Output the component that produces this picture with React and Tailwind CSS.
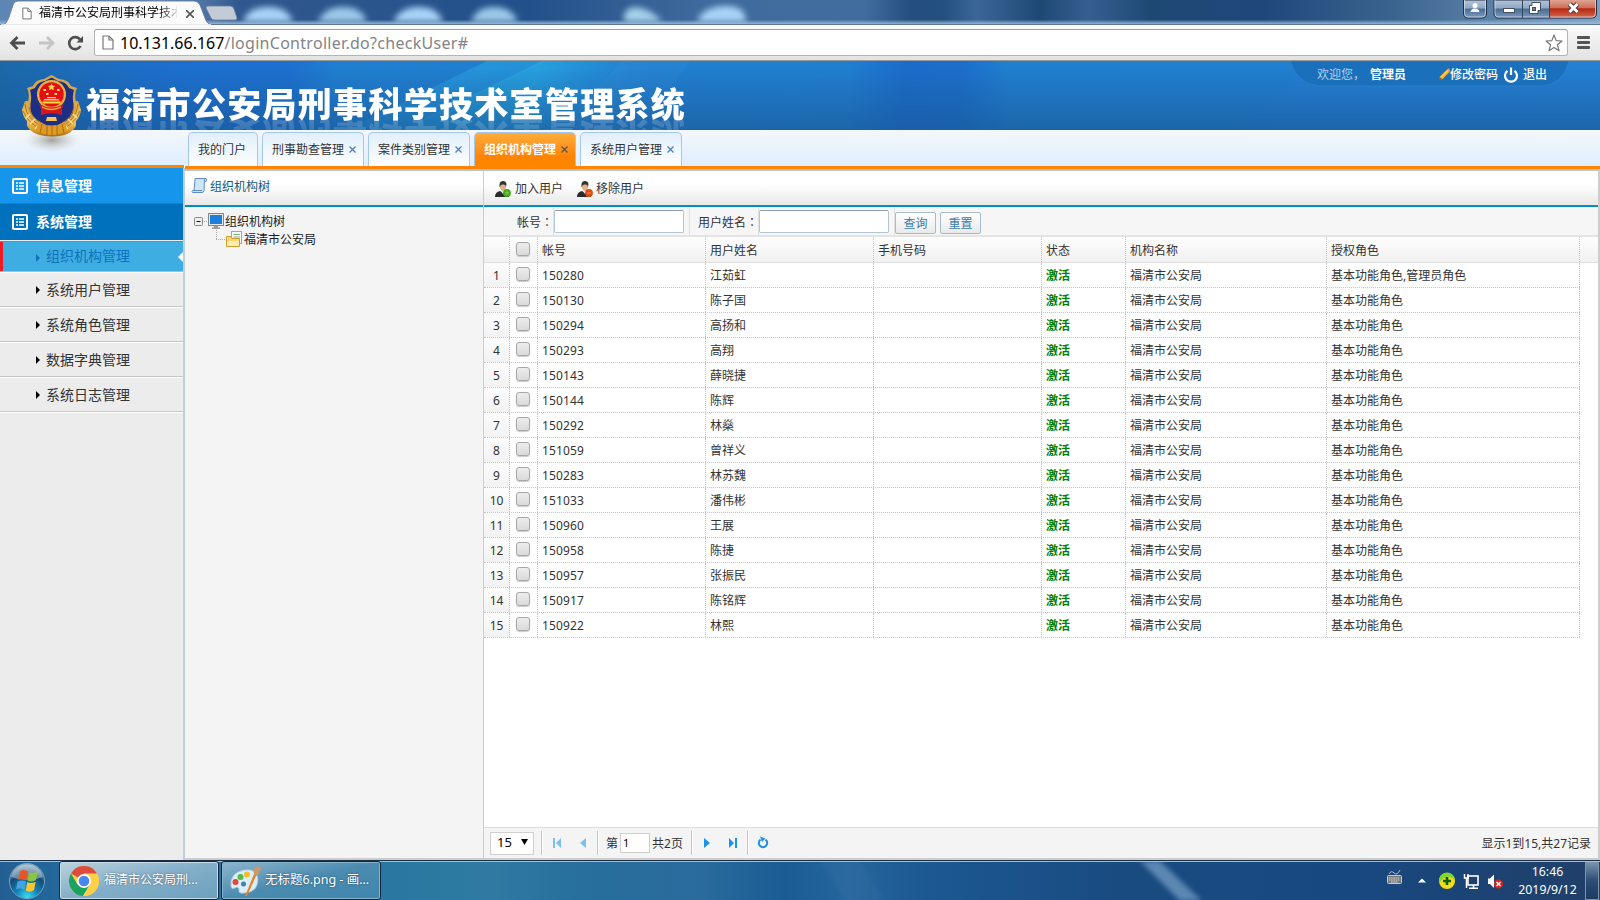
import React from "react";

const ROWS = [
  ["150280", "江茹虹", "基本功能角色,管理员角色"],
  ["150130", "陈子国", "基本功能角色"],
  ["150294", "高扬和", "基本功能角色"],
  ["150293", "高翔", "基本功能角色"],
  ["150143", "薛晓捷", "基本功能角色"],
  ["150144", "陈辉", "基本功能角色"],
  ["150292", "林燊", "基本功能角色"],
  ["151059", "曾祥义", "基本功能角色"],
  ["150283", "林苏魏", "基本功能角色"],
  ["151033", "潘伟彬", "基本功能角色"],
  ["150960", "王展", "基本功能角色"],
  ["150958", "陈捷", "基本功能角色"],
  ["150957", "张振民", "基本功能角色"],
  ["150917", "陈铭辉", "基本功能角色"],
  ["150922", "林熙", "基本功能角色"],
];

const COLS = "grid grid-cols-[26px_28px_168px_168px_168px_84px_201px_253px]";
const TITLE = "福清市公安局刑事科学技术室管理系统";

function PageIcon({ className }) {
  return (
    <svg className={className} width="12" height="15" viewBox="0 0 12 15" fill="#fff" stroke="#777" strokeWidth="1.2">
      <path d="M1 1h6l4 4v9H1z" />
      <path d="M7 1v4h4" fill="none" />
    </svg>
  );
}

function TitleBar() {
  return (
    <div className="relative flex h-[25px] shrink-0 overflow-hidden bg-[#28548a]">
      <svg className="absolute inset-0" width="1600" height="25">
        <defs>
          <linearGradient id="tb" x1="0" x2="1" y1="0" y2="0">
            <stop offset="0" stopColor="#5d86b4" />
            <stop offset=".1" stopColor="#6f93bd" />
            <stop offset=".15" stopColor="#31588e" />
            <stop offset=".33" stopColor="#22508a" />
            <stop offset=".44" stopColor="#3f6a9d" />
            <stop offset=".54" stopColor="#416d9e" />
            <stop offset=".57" stopColor="#234d7d" />
            <stop offset=".59" stopColor="#23507f" />
            <stop offset=".61" stopColor="#3b6697" />
            <stop offset=".65" stopColor="#1e4874" />
            <stop offset=".68" stopColor="#365f90" />
            <stop offset=".72" stopColor="#1e4874" />
            <stop offset=".79" stopColor="#20477a" />
            <stop offset=".87" stopColor="#3a648f" />
            <stop offset="1" stopColor="#7f9fc0" />
          </linearGradient>
          <linearGradient id="tbv" x1="0" x2="0" y1="0" y2="1">
            <stop offset=".78" stopColor="#9bbce0" stopOpacity="0" />
            <stop offset=".95" stopColor="#9bbce0" stopOpacity=".85" />
          </linearGradient>
          <filter id="bl" x="-50%" y="-50%" width="200%" height="200%"><feGaussianBlur stdDeviation="3" /></filter>
        </defs>
        <rect width="1600" height="25" fill="url(#tb)" />
        <g filter="url(#bl)" fill="#a9d3f6">
          <path d="M243 22Q248 7 268 7T293 22Z" />
          <path d="M318 22Q324 7 343 7T367 22Z" fill="#9cc8e8" />
          <path d="M393 22Q400 7 419 7T443 22Z" />
          <path d="M471 22Q476 7 494 7T518 22Z" fill="#9cc8e8" />
          <path d="M624 22Q622 8 636 7Q652 9 662 22Z" fill="#a5cfea" />
          <path d="M697 22Q702 7 724 6T746 22Z" />
        </g>
        <rect width="1600" height="25" fill="url(#tbv)" />
        <rect y="24" width="1600" height="1" fill="#5c7696" />
        <path d="M206 8Q206 6 208 6H230Q233 6 234 9L237 18Q237 20 235 20H215Q212 20 211 18Z" fill="#c3cbd6" stroke="#6c7f99" strokeWidth=".8" />
        <path d="M0 25C6 25 7 22 9 17L13 5Q14 1 18 1H194Q198 1 200 5L205 18Q207 25 213 25Z" fill="#fbfbfb" stroke="#5b7390" strokeWidth=".8" />
        <rect y="24.3" x="1" width="210" height="1" fill="#fbfbfb" />
      </svg>
      <div className="relative flex h-[25px] w-[215px] items-center pl-[22px]">
        <PageIcon className="mt-0.5 w-[10px]" />
        <span className="ml-[7px] w-[138px] overflow-hidden whitespace-nowrap bg-gradient-to-r from-black from-85% to-[#ddd] bg-clip-text pt-px text-xs leading-6 text-transparent">
          福清市公安局刑事科学技术
        </span>
        <svg className="ml-[9px] mt-0.5" width="8" height="8" stroke="#555" strokeWidth="1.6"><path d="M0 0L8 8M8 0L0 8" /></svg>
      </div>
      <svg className="relative ml-auto" width="140" height="20">
        <defs>
          <linearGradient id="wb" x1="0" x2="0" y1="0" y2="1">
            <stop offset="0" stopColor="#b3c4d8" /><stop offset=".45" stopColor="#90a8c3" /><stop offset=".5" stopColor="#476b93" /><stop offset="1" stopColor="#7f9dc0" />
          </linearGradient>
          <linearGradient id="wr" x1="0" x2="0" y1="0" y2="1">
            <stop offset="0" stopColor="#e0a392" /><stop offset=".45" stopColor="#cd6d58" /><stop offset=".5" stopColor="#b5290f" /><stop offset="1" stopColor="#d6674c" />
          </linearGradient>
        </defs>
        <path d="M3.500 0V13Q3.500 18 8 18H22Q26.500 18 26.500 13V0Z" fill="url(#wb)" stroke="#1f2f47" />
        <path d="M34 0V13Q34 18 38 18H132Q136.500 18 136.500 13V0Z" fill="url(#wb)" stroke="#1f2f47" />
        <path d="M90 0V17.500H132Q136 17.500 136 13V0Z" fill="url(#wr)" />
        <path d="M4.500 0V13Q4.500 17 8 17H22Q25.500 17 25.500 13V0M35 0V13Q35 17 38 17H132Q135.500 17 135.500 13V0" fill="none" stroke="#dce6f0" strokeOpacity=".7" />
        <path d="M62.500 0V18M89.500 0V18" stroke="#33445d" />
        <circle cx="15" cy="5.500" r="2.500" fill="#fff" /><path d="M10.500 12Q11 8.500 15 8.500T19.500 12Z" fill="#fff" />
        <rect x="43.500" y="8.500" width="11" height="4" fill="#fff" stroke="#444f60" />
        <path d="M72 2.500H80.500V10.500H78V13.500H69.500V5.500H72Z" fill="#fff" stroke="#444f60" /><rect x="72.500" y="7.500" width="3" height="3" fill="#6d86a5" stroke="#444f60" />
        <path d="M109.500 4L117.500 12M117.500 4L109.500 12" stroke="#4c3a3f" strokeWidth="5" /><path d="M109.500 4L117.500 12M117.500 4L109.500 12" stroke="#fff" strokeWidth="3" />
      </svg>
    </div>
  );
}

function AddressBar() {
  return (
    <div className="flex h-[36px] shrink-0 items-center border-b border-[#9a9a9a] bg-gradient-to-b from-[#fbfbfb] to-[#e2e2e2] pl-[9px]">
      <svg width="76" height="20" viewBox="0 0 76 20" fill="none" strokeWidth="2.800">
        <path d="M16 10H3M8.500 4L2.500 10L8.500 16" stroke="#4d4d4d" />
        <path d="M30 10H43M38 4L44 10L38 16" stroke="#c4c4c4" />
        <path d="M71 6.500A6 6 0 1 0 71.500 13" stroke="#4d4d4d" strokeWidth="2.600" />
        <path d="M74 3V9.500H67.500Z" fill="#4d4d4d" />
      </svg>
      <div className="ml-[9px] flex h-[27px] w-[1474px] items-center rounded-[3px] border border-[#b4b4b4] border-t-[#9d9d9d] bg-white pl-[7px]">
        <PageIcon />
        <span className="ml-[6px] font-['Noto_Sans'] text-[16px] leading-6 text-black">
          10.131.66.167<span className="tracking-[0.290px] text-[#848484]">/loginController.do?checkUser#</span>
        </span>
        <svg className="ml-auto mr-[4px]" width="18" height="18" viewBox="0 0 18 18" fill="none" stroke="#777" strokeWidth="1.200" strokeLinejoin="round">
          <path d="M9 1L11.200 6.600L17 7L12.500 10.800L14 16.800L9 13.600L4 16.800L5.500 10.800L1 7L6.800 6.600Z" />
        </svg>
      </div>
      <svg className="ml-[9px]" width="13" height="13" fill="#555"><rect width="13" height="3" rx="1" /><rect y="5" width="13" height="3" rx="1" /><rect y="10" width="13" height="3" rx="1" /></svg>
    </div>
  );
}

function Emblem() {
  return (
    <svg className="absolute left-[20px] top-[13px]" width="64" height="80" viewBox="0 0 64 80">
      <defs>
        <linearGradient id="gold" x1="0" x2="0" y1="0" y2="1">
          <stop offset="0" stopColor="#d8a038" /><stop offset=".5" stopColor="#f2c768" /><stop offset=".8" stopColor="#e0a030" /><stop offset="1" stopColor="#a86a10" />
        </linearGradient>
        <radialGradient id="emsh"><stop offset="0" stopColor="#7b7568" stopOpacity=".65" /><stop offset="1" stopColor="#b9b9b4" stopOpacity="0" /></radialGradient>
      </defs>
      <ellipse cx="32" cy="66" rx="27" ry="12" fill="url(#emsh)" />
      <path d="M5 27L2 36Q3 43 7 47L7 52L10 56Q17 62 31.500 62.500T53 56L56 52L56 47Q60 43 61 36L58 27Z" fill="url(#gold)" />
      <path d="M31.500 1L39 5Q49 6 51 12Q54 13 57 14Q54 20 56 28Q58 42 48 49L32 56L16 49Q6 42 8 28Q10 20 7 14Q10 13 13 12Q15 6 24 5Z" fill="#d6a64d" />
      <path d="M31.500 3.500L38 7Q46 7.500 49 14L54 16Q52 22 53.500 30Q55 41 46 47L32 54L18 47Q9 41 10.500 30Q12 22 10 16L15 14Q18 7.500 25 7Z" fill="#1d2f84" />
      <circle cx="31.500" cy="20.500" r="14.500" fill="#e8b23d" />
      <circle cx="31.500" cy="20.500" r="12.200" fill="#e40f16" />
      <path d="M31.500 9.500l1.100 2.300 2.500.3-1.800 1.700.5 2.500-2.300-1.200-2.300 1.200.5-2.500-1.800-1.700 2.500-.3zM23.500 15h2.500v2h-2.500zM37 15h2.500v2H37zM26 19h2.500v2H26zM34.500 19H37v2h-2.500z" fill="#ffd94a" />
      <path d="M22.500 27.500h18v2h-18zM25 25h13l2 1.500H23zM27 23h9v1.200h-9z" fill="#ffd94a" />
      <path d="M19 30Q31.500 37 44 30L42 34V41Q31.500 37.500 21 41V34Z" fill="#d9141b" />
      <path d="M22 33Q31.500 38 41 33" stroke="#f0b83a" strokeWidth="1.300" fill="none" />
      <path d="M5 30Q6 47 26 54M3 37Q8 51 28 58M58 30Q57 47 38 54M60 37Q55 51 36 58M9 33Q11 44 22 49M54 33Q52 44 42 49" stroke="#b37416" strokeWidth="1" fill="none" />
      <path d="M10 40L6 44M15 45L10 50M20 49L15 55M53 40L57 44M48 45L53 50M43 49L48 55" stroke="#ffe08c" strokeWidth="1.500" />
      <path d="M18 48Q31.500 55 45 48L47 57Q32 65 16 57Z" fill="#dd9a26" />
      <path d="M27 51V61M32 52V62M37 51V61M22 50L20 59M42 50L44 59" stroke="#a66a10" strokeWidth="1" />
      <path d="M27 43h9l1 4h-11z" fill="#f3c35d" />
    </svg>
  );
}

function Header() {
  return (
    <div className="relative z-10 h-[69px] shrink-0">
      <svg className="absolute inset-0" width="1600" height="69">
        <defs>
          <linearGradient id="hb" x1="0" x2="1" y1="0" y2="0">
            <stop offset="0" stopColor="#1b68a8" /><stop offset=".05" stopColor="#1d6cbc" /><stop offset=".11" stopColor="#1c6fce" /><stop offset=".18" stopColor="#1c70ce" /><stop offset=".21" stopColor="#207ed0" /><stop offset=".5" stopColor="#207fd1" /><stop offset=".53" stopColor="#207ed0" /><stop offset=".565" stopColor="#1b6cca" /><stop offset=".6" stopColor="#1b6eca" /><stop offset=".63" stopColor="#207fd0" /><stop offset="1" stopColor="#2080d2" />
          </linearGradient>
          <linearGradient id="hv" x1="0" x2="0" y1="0" y2="1">
            <stop offset=".1" stopColor="#1a5591" stopOpacity="0" /><stop offset="1" stopColor="#1a5796" stopOpacity=".65" />
          </linearGradient>
          <linearGradient id="ray" gradientUnits="userSpaceOnUse" x1="500" x2="545" y1="0" y2="92">
            <stop offset="0" stopColor="#2aa9e6" stopOpacity=".5" /><stop offset="1" stopColor="#2aa9e6" stopOpacity="0" />
          </linearGradient>
          <linearGradient id="ray2" gradientUnits="userSpaceOnUse" x1="540" x2="640" y1="0" y2="30">
            <stop offset="0" stopColor="#2cb4e6" stopOpacity=".6" /><stop offset="1" stopColor="#2aa9e6" stopOpacity="0" />
          </linearGradient>
        </defs>
        <rect width="1600" height="69" fill="url(#hb)" />
        <path d="M487 0H545L404 69H346Z" fill="url(#ray)" />
        <path d="M542 0H680L600 69H401Z" fill="url(#ray2)" />
        <path d="M622 0H690L640 69H560Z" fill="#4a9be0" opacity=".15" />
        <path d="M1310 0L1241 69H1600V0Z" fill="#2b83dc" opacity=".28" />
        <rect width="1600" height="69" fill="url(#hv)" />
        <path d="M1290 0Q1298 25 1322 25H1540Q1562 25 1569 0Z" fill="#1b70bb" stroke="#2b84cf" strokeWidth=".8" />
      </svg>
      <div className="relative flex justify-between">
        <div className="h-[69px] overflow-hidden pl-[86px] pt-[21px] font-['Noto_Sans_CJK_SC'] text-[34px] font-black leading-[42px] tracking-[1.300px] text-white">
          <div className="whitespace-nowrap [-webkit-box-reflect:below_-10px_linear-gradient(transparent,rgba(255,255,255,0.22))]">{TITLE}</div>
        </div>
        <div className="mr-[53px] flex h-[26px] items-center pt-px text-xs leading-6 text-white">
          <span className="w-[53px] text-[#b9cfe4]">欢迎您，</span>
          <b className="w-[68px]">管理员</b>
          <svg width="12" height="13" viewBox="0 0 12 13"><path d="M1 12L2 8.500L9.500 1L12 3.500L4.500 11Z" fill="#f5b42a" /><path d="M9 1.500L10.500 0L12.500 2.500L11.500 4Z" fill="#e68a5c" /><path d="M.5 12.500L1.800 9L4.200 11.300Z" fill="#8c5a38" /><path d="M3 9.500L10 2.500" stroke="#ffe38a" /></svg>
          <b className="w-[53px] font-medium">修改密码</b>
          <svg width="16" height="16" viewBox="0 0 16 16" fill="none" stroke="#fff" strokeWidth="2.200"><path d="M4.500 3.800A6 6 0 1 0 11.500 3.800M8 .5V8" /></svg>
          <b className="ml-[4px] font-medium">退出</b>
        </div>
      </div>
      <Emblem />
    </div>
  );
}

function Tab({ label, active, closable = true }) {
  return (
    <div className={"flex h-[34px] items-center rounded-t-[5px] border border-b-0 border-[#a5c8f0] " + (active ? "w-[102px] bg-gradient-to-b from-[#ffac38] to-[#ff8500] to-70% pl-[9px] font-bold text-white" : (closable ? "w-[102px]" : "w-[70px]") + " bg-gradient-to-b from-[#e2effd] to-[#fdfeff] pl-[9px] text-[#333]")}>
      <span className="whitespace-nowrap text-xs leading-5">{label}</span>
      {closable && (
        <svg className="ml-[5px]" width="7" height="7" stroke={active ? "#555" : "#4f7fc0"} strokeWidth="1.300"><path d="M.5 .5L6.500 6.500M6.500 .5L.5 6.500" /></svg>
      )}
    </div>
  );
}

function MenuHead({ label, className }) {
  return (
    <div className={"flex items-center pl-[12px] text-white " + className}>
      <svg width="16" height="16" fill="none" stroke="#fff"><rect x="1" y="1" width="14" height="14" rx="1" strokeWidth="2" /><path d="M4 5H6M7 5H12M4 8H6M7 8H12M4 11H6M7 11H12" strokeWidth="1.500" /></svg>
      <b className="ml-[8px] text-sm leading-6">{label}</b>
    </div>
  );
}

function Sidebar() {
  return (
    <div className="flex w-[185px] shrink-0 flex-col">
      <div className="h-[35px] bg-gradient-to-b from-[#f4f7fa] to-[#deeeff]" />
      <div className="h-[3px] w-[184px] bg-[#ff8500]" />
      <div className="flex-1 border-r-2 border-[#bcd0d6] bg-[#ececec]">
        <MenuHead label="信息管理" className="h-[36px] border-b border-[#0b80d3] bg-[#1595ec]" />
        <MenuHead label="系统管理" className="h-[36px] bg-[#0072bd]" />
        <div className="mt-px flex h-[31px] items-center border-b border-t border-b-[#b5bcc0] border-t-[#2f9fd5] bg-[#3eade2] text-[#0f72bd]">
          <div className="h-full w-[3px] bg-[#ed1c24]" />
          <svg className="ml-[33px] mt-[2px]" width="4" height="8" fill="#0f72bd"><path d="M0 0L4 4L0 8Z" /></svg>
          <span className="-mt-px ml-[6px] text-sm leading-6">组织机构管理</span>
          <svg className="ml-auto" width="5" height="10" fill="#fff"><path d="M5 0L0 5L5 10Z" /></svg>
        </div>
        {["系统用户管理", "系统角色管理", "数据字典管理", "系统日志管理"].map((t) => (
          <div key={t} className="flex h-[35px] items-center border-b border-t border-b-[#c6c6c6] border-t-white text-[#333]">
            <svg className="ml-[36px]" width="4" height="8"><path d="M0 0L4 4L0 8Z" /></svg>
            <span className="ml-[6px] text-sm leading-6">{t}</span>
          </div>
        ))}
        <div className="h-px bg-white" />
      </div>
    </div>
  );
}

function TreePanel() {
  return (
    <div className="flex w-[298px] shrink-0 flex-col bg-[#f4f4f4]">
      <div className="flex h-[36px] items-center border-b-2 border-[#0090c0] bg-gradient-to-b from-white from-40% to-[#e8e8e8] pl-[6px] text-[#10587c]">
        <svg className="-mt-[5px]" width="17" height="17" viewBox="0 0 17 17" fill="#cfe4f8" stroke="#5d8cc4"><path d="M4 1.500H15Q16.500 3 15 4.500H13.500L13 13.500Q12.500 15.500 11 15.500H1.500Q.5 14.500 1.500 13.500H3L4 3Z" /><path d="M13.500 4.500Q12.500 2.500 14.500 1.500M3 13.500H11" fill="none" /></svg>
        <span className="-mt-[2px] ml-[2px] text-xs leading-6">组织机构树</span>
      </div>
      <div className="pt-[5px] text-xs text-[#222]">
        <div className="flex h-[18px] items-center pl-[9px]">
          <svg width="30" height="18" viewBox="0 0 30 18">
            <rect x=".5" y="5.500" width="8" height="8" rx="1" fill="#eee" stroke="#888" /><path d="M2.500 9.500H6.500" stroke="#111" /><path d="M10 9.500H14" stroke="#aaa" strokeDasharray="1 1" />
            <rect x="14.500" y="1.500" width="15" height="12" fill="#e6e6e6" stroke="#888" /><rect x="16" y="3" width="12" height="9" fill="#1d80dc" /><path d="M20 14h4v1.500h2V17h-8v-1.500h2z" fill="#999" />
          </svg>
          <span className="ml-px whitespace-nowrap pt-[2px] leading-[18px]">组织机构树</span>
        </div>
        <div className="flex h-[18px] items-center pl-[30px]">
          <svg width="28" height="18" viewBox="0 0 28 18">
            <path d="M1.500 0V9M1 9.500H10" stroke="#aaa" strokeDasharray="1 1" fill="none" />
            <rect x="16.500" y="1.500" width="10" height="12" fill="#f5f9ff" stroke="#86abd9" /><path d="M18.500 4.500H25M18.500 7H25M18.500 9.500H25" stroke="#7ab686" />
            <path d="M11.500 16.500V6.500H16L17 8.500H24.500V16.500Z" fill="#fbd873" stroke="#d49a2c" /><path d="M12 11H24V16H12Z" fill="#ffedb0" />
          </svg>
          <span className="ml-[1px] whitespace-nowrap pt-[2px] leading-[18px]">福清市公安局</span>
        </div>
      </div>
    </div>
  );
}

function UserIcon({ color, minus }) {
  return (
    <svg width="16" height="16" viewBox="0 0 16 16">
      <path d="M0 16Q0 11 5 10L8 12L10 10Q14 11 14 16Z" fill="#2b2b2e" />
      <path d="M5.500 9.500L8 13L10.500 9.500Z" fill="#e8e8e8" /><path d="M5 3Q8 0 11 3V7Q10 10 8 10T5 7Z" fill="#e2b08a" />
      <path d="M4.500 6V3Q5 0 8 0T11.500 3L11 6Q11 3 8 3.500Q5 3 5 6Z" fill="#333" />
      <circle cx="12" cy="12" r="3.900" fill={color} /><path d={minus ? "M10 12H14" : "M10 12H14M12 10V14"} stroke={minus ? "#ff8a5a" : "#7fd040"} strokeWidth="1" />
    </svg>
  );
}

function Check() {
  return <span className="mb-[4px] block size-[14px] rounded-[3px] border border-[#a6a6a6] bg-gradient-to-b from-[#ededed] to-[#dadada] shadow-[0_1px_1px_#ccc]" />;
}

function Cell({ children, className = "pl-[4px]" }) {
  return <div className={"flex h-full items-center whitespace-nowrap border-r border-dotted border-[#c4c4c4] pt-[2px] " + className}>{children}</div>;
}

function SearchButton({ children }) {
  return <button className="mt-[3px] flex h-[22px] w-[41px] items-center justify-center rounded-[2px] border border-[#a6bccb] bg-gradient-to-b from-white to-[#e9e9e9] pt-[2px] text-xs leading-5 text-[#3b7ca8]">{children}</button>;
}

function Sep({ className = "" }) {
  return <div className={"h-[24px] w-[2px] border-l border-[#c6c6c6] bg-white " + className} />;
}

function Colon() {
  return <span className="font-['Noto_Sans_CJK_TC']">：</span>;
}

function GridPanel() {
  return (
    <div className="flex flex-1 flex-col border-l border-[#c9cfd2] bg-white text-xs text-[#333]">
      <div className="flex h-[36px] items-center border-b-2 border-[#0090c0] bg-gradient-to-b from-white from-40% to-[#e8e8e8] pl-[11px] pt-px">
        <UserIcon color="#45a81e" />
        <span className="ml-[4px] w-[62px] pt-px leading-6">加入用户</span>
        <UserIcon color="#e04a15" minus />
        <span className="ml-[3px] pt-px leading-6">移除用户</span>
      </div>
      <div className="flex h-[30px] items-center border-b-2 border-[#e4e4e4] bg-[#f6f6f6]">
        <span className="w-[70px] whitespace-nowrap border-r border-[#e0e0e0] pl-[33px] pt-[2px] leading-[26px]">帐号<Colon /></span>
        <div className="mt-px h-[23px] w-[130px] rounded-[2px] border border-[#b3c6d4] border-t-[#8aa0b2] bg-white" />
        <div className="ml-[5px] w-[70px] whitespace-nowrap border-l border-r border-[#e0e0e0] pl-[8px] pt-[2px] leading-[26px]">用户姓名<Colon /></div>
        <div className="mt-px h-[23px] w-[130px] rounded-[2px] border border-[#b3c6d4] border-t-[#8aa0b2] bg-white" />
        <div className="ml-[5px] flex h-[28px] items-center gap-[4px] border-l border-[#e0e0e0]">
          <SearchButton>查询</SearchButton>
          <SearchButton>重置</SearchButton>
        </div>
      </div>
      <div className="h-[26px] border-b border-[#dedede] bg-gradient-to-b from-[#fdfdfd] to-[#f1f1f1]">
        <div className={COLS + " h-full"}>
          <Cell />
          <Cell className="pl-[6px]"><Check /></Cell>
          {["帐号", "用户姓名", "手机号码", "状态", "机构名称", "授权角色"].map((t) => <Cell key={t}>{t}</Cell>)}
        </div>
      </div>
      <div className="flex-1">
        {ROWS.map((r, i) => (
          <div key={r[0]} className={COLS + " h-[25px] w-[1096px] border-b border-dotted border-[#c4c4c4]"}>
            <Cell className="justify-center bg-gradient-to-b from-[#fcfcfc] to-[#f2f2f2]">{i + 1}</Cell>
            <Cell className="pl-[6px]"><Check /></Cell>
            <Cell className="pl-[4px] tracking-[0.150px]">{r[0]}</Cell>
            <Cell>{r[1]}</Cell>
            <Cell />
            <Cell className="pl-[4px] font-bold text-[#008000]">激活</Cell>
            <Cell>福清市公安局</Cell>
            <Cell>{r[2]}</Cell>
          </div>
        ))}
      </div>
      <div className="flex h-[31px] items-center border-t border-[#dedede] bg-[#f4f4f4] pl-[6px] pr-[7px]">
        <div className="flex h-[23px] w-[44px] items-center border border-[#cfcfcf] bg-white pl-[6px] text-[13px] text-black">
          15
          <svg className="-mt-[2px] ml-[9px]" width="7" height="6"><path d="M0 0H7L3.500 6Z" /></svg>
        </div>
        <Sep className="ml-[7px]" />
        <svg className="ml-[10px]" width="34" height="10" fill="#7cc0f0"><path d="M0 0H2V10H0ZM8 0V10L3 5ZM33 0V10L27 5Z" /></svg>
        <Sep className="ml-[10px]" />
        <span className="ml-[7px] pt-px">第</span>
        <div className="ml-[2px] flex h-[20px] w-[30px] items-center border border-[#cfcfcf] bg-white pl-[2px] text-[11px] text-black">1</div>
        <span className="ml-[2px] w-[39px] whitespace-nowrap pt-px">共2页</span>
        <Sep />
        <svg className="ml-[11px]" width="34" height="10" fill="#1a93e8"><path d="M0 0L6 5L0 10ZM25 0L30 5L25 10ZM31 0H33V10H31Z" /></svg>
        <Sep className="ml-[9px]" />
        <svg className="-mt-px ml-[8px]" width="12" height="13" viewBox="0 0 12 13" fill="none" stroke="#2590dc" strokeWidth="2"><path d="M8.500 3.600A4.200 4.200 0 1 1 3.500 3.600" /><path d="M3 0.500L8.500 2.500L5 6Z" fill="#2590dc" stroke="none" /></svg>
        <span className="ml-auto pt-[2px]">显示1到15,共27记录</span>
      </div>
    </div>
  );
}

function Taskbar() {
  return (
    <div className="relative flex h-[40px] shrink-0 items-center overflow-hidden border-t border-[#1b3048]">
      <svg className="absolute inset-0" width="1600" height="40">
        <defs>
          <linearGradient id="kb" x1="0" x2="1" y1="0" y2="0">
            <stop offset="0" stopColor="#235f93" /><stop offset=".04" stopColor="#23699c" /><stop offset=".25" stopColor="#2a78a1" /><stop offset=".31" stopColor="#2e7aa3" /><stop offset=".36" stopColor="#276f9d" /><stop offset=".44" stopColor="#2a6b9c" /><stop offset=".49" stopColor="#1a5c94" /><stop offset=".53" stopColor="#26659d" /><stop offset=".58" stopColor="#1c5892" /><stop offset=".7" stopColor="#194b80" /><stop offset=".85" stopColor="#184880" /><stop offset="1" stopColor="#203f68" />
          </linearGradient>
          <filter id="kbl"><feGaussianBlur stdDeviation="2.500" /></filter>
        </defs>
        <rect width="1600" height="40" fill="url(#kb)" />
        <path d="M1140 0H1160L1202 40H1180Z" fill="#7fa8cc" opacity=".65" filter="url(#kbl)" />
        <path d="M820 0H860L885 40H845Z" fill="#4c84b3" opacity=".15" filter="url(#kbl)" />
        <rect width="1600" height="1" fill="#9dc1d9" />
      </svg>
      <svg className="relative ml-[8px]" width="38" height="38" viewBox="0 0 38 38">
        <defs>
          <radialGradient id="orb" cx=".5" cy=".95" r=".9"><stop offset="0" stopColor="#35e0f8" /><stop offset=".35" stopColor="#1482b8" /><stop offset=".7" stopColor="#144a78" /><stop offset="1" stopColor="#87a8bd" /></radialGradient>
        </defs>
        <circle cx="19" cy="19" r="17.500" fill="url(#orb)" stroke="#76a5bd" />
        <path d="M3 15A16.500 16.500 0 0 1 35 15Q19 21 3 15Z" fill="#fff" opacity=".35" />
        <path d="M12 9Q16 7 20 9.500L18.500 18Q14 16 10 18Z" fill="#e8562a" />
        <path d="M21 10Q25 12 30 9.500L28 18Q24 20.500 19.500 18.500Z" fill="#8cc63e" />
        <path d="M9.500 19.500Q14 17.500 18 19.500L16.500 28Q12 25.500 8 27.500Z" fill="#3fa4e0" />
        <path d="M19.300 20Q23 22 27.700 19.700L26 28Q22 31 17.700 28.500Z" fill="#fcc52c" />
      </svg>
      <div className="relative ml-[13px] flex h-[39px] w-[160px] items-center rounded-[3px] border border-[#12283c] bg-gradient-to-br from-[#bcd2de] via-[#83aec9] to-[#6ba0be] pl-[9px] text-xs text-white shadow-[inset_0_0_0_1px_#c8dce7]">
        <svg width="30" height="30" viewBox="0 0 30 30">
          <circle cx="15" cy="15" r="15" fill="#fdd04a" />
          <path d="M15 15L2 7.500A15 15 0 0 1 28 7.500H15Z" fill="#dd4b3e" /><path d="M2 7.500A15 15 0 0 0 14 30L21.500 18.500L15 15L8.500 18.500Z" fill="#1aa260" />
          <path d="M15 8H28.200A15 15 0 0 1 14 30L21 18Z" fill="#fdd04a" />
          <circle cx="15" cy="15" r="7" fill="#fff" /><circle cx="15" cy="15" r="5.300" fill="#4a86f0" />
        </svg>
        <span className="ml-[5px] whitespace-nowrap pb-px leading-6 [text-shadow:0_0_2px_#456]">福清市公安局刑...</span>
      </div>
      <div className="relative ml-[2px] flex h-[39px] w-[160px] items-center rounded-[3px] border border-[#12283c] bg-gradient-to-br from-[#8db6cc] via-[#4b8bb0] to-[#3f86ad] pl-[8px] text-xs text-white shadow-[inset_0_0_0_1px_#86b3cb]">
        <svg width="33" height="32" viewBox="0 0 33 32">
          <path d="M1 22Q-1 8 14 5Q27 3 28 14Q28 27 15 28Q8 29 9 25Q9 21 5 23Q2 25 1 22Z" fill="#dceef8" stroke="#9cc2da" strokeWidth=".8" />
          <circle cx="5.500" cy="17" r="3" fill="#e5483a" /><circle cx="10.500" cy="12" r="3" fill="#58b847" /><circle cx="17" cy="9.500" r="3" fill="#f6bd2c" /><circle cx="13.500" cy="19" r="2.500" fill="#3d83ad" />
          <path d="M24 9L26.500 10L17 31L15 31Z" fill="#e8842a" /><path d="M24 9L23 3Q26 4 28 0L32 4Q29 5 29 9L26.500 11Z" fill="#c79a70" />
        </svg>
        <span className="ml-[2px] whitespace-nowrap pb-px text-[12.500px] leading-6 [text-shadow:0_0_2px_#246]">无标题6.png - 画...</span>
      </div>
      <svg className="relative ml-auto" width="118" height="24" viewBox="0 0 118 24">
        <path d="M2 5Q4 1 7 4T13 1" stroke="#bbb" fill="none" /><rect x=".5" y="6.500" width="14" height="8" rx="1" fill="#777" stroke="#c8c8c8" /><path d="M2 9H13M2 11H13M4 13H11" stroke="#ddd" strokeDasharray="1.500 .7" />
        <path d="M31 13.500L35 9.500L39 13.500Z" fill="#fff" />
        <circle cx="60" cy="12" r="8" fill="#f3dc14" /><path d="M52 14Q60 3 68 11A8 8 0 0 0 52 12Z" fill="#7fd82b" /><path d="M60 8V16M56 12H64" stroke="#0b5c18" strokeWidth="2.600" />
        <rect x="81" y="7" width="10" height="9" fill="#1d3f68" stroke="#fff" strokeWidth="1.600" /><path d="M82 19.200H91M86.500 16V19" stroke="#fff" strokeWidth="1.600" /><path d="M77.500 5V9H81V5M79.500 9V19" stroke="#fff" strokeWidth="1.500" fill="none" />
        <path d="M101 9.500H103L107 5.500V19L103 15H101Z" fill="#fff" /><circle cx="111.500" cy="15" r="4.500" fill="#d9261c" /><path d="M109.500 13L113.500 17M113.500 13L109.500 17" stroke="#fff" strokeWidth="1.400" />
      </svg>
      <div className="relative ml-[9px] w-[67px] text-center text-[12.300px] leading-[18px] text-white">
        <div>16:46</div>
        <div>2019/9/12</div>
      </div>
      <div className="relative ml-[4px] mr-[1px] h-[38px] w-[14px] border border-[#7d95ae] bg-gradient-to-b from-[#7890aa] via-[#2c4c74] to-[#1d3a60]" />
    </div>
  );
}

export default function App() {
  return (
    <div className="flex h-[900px] w-[1600px] flex-col overflow-hidden bg-white font-['Noto_Sans','Noto_Sans_CJK_SC',sans-serif]">
      <TitleBar />
      <AddressBar />
      <Header />
      <div className="flex min-h-0 flex-1">
        <Sidebar />
        <div className="flex min-w-0 flex-1 flex-col">
          <div className="flex h-[39px] items-end gap-[4px] border-b-[3px] border-[#ff8500] bg-gradient-to-b from-[#f4f7fa] to-[#deeeff] pl-[3px]">
            <Tab label="我的门户" closable={false} />
            <Tab label="刑事勘查管理" />
            <Tab label="案件类别管理" />
            <Tab label="组织机构管理" active />
            <Tab label="系统用户管理" />
          </div>
          <div className="flex min-h-0 flex-1 border-b-2 border-r-2 border-[#cdcdcd]">
            <div className="flex min-w-0 flex-1 border-t-2 border-[#b3c3cf]">
              <TreePanel />
              <GridPanel />
            </div>
          </div>
        </div>
      </div>
      <Taskbar />
    </div>
  );
}
